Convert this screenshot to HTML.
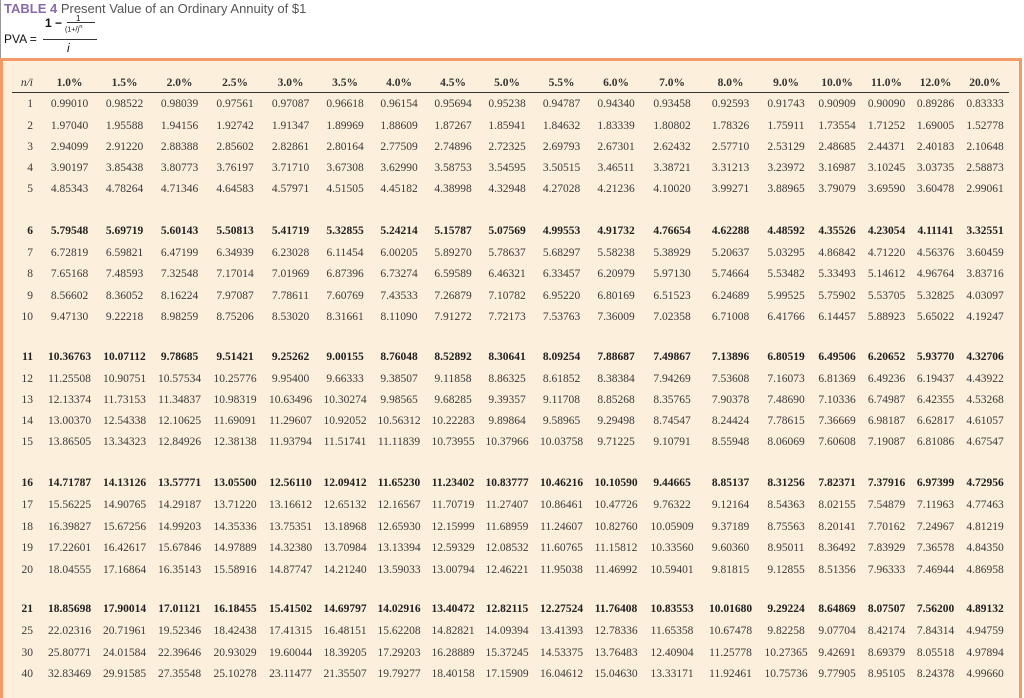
<!DOCTYPE html>
<html><head><meta charset="utf-8"><style>
body{margin:0;width:1024px;height:688px;background:#fff;overflow:hidden;position:relative;font-family:"Liberation Serif",serif;}
.hdr{position:absolute;left:0;top:0;width:1024px;height:58px;border-left:1px solid #999;}
.title{position:absolute;left:3px;top:1px;font-family:"Liberation Sans",sans-serif;font-size:13px;color:#555;}
.title b{color:#8a6aa8;}
.f{position:absolute;font-family:"Liberation Sans",sans-serif;color:#111;}
.panel{position:absolute;left:0;top:58px;width:1022px;height:640px;background:#fcefdc;border-top:3px solid #f29a68;border-left:3px solid #f29a68;border-right:3px solid #f29a68;box-sizing:border-box;}
.r{position:absolute;left:0;display:grid;grid-template-columns:42px 55px 55px 55px 56px 55px 54px 54px 54px 54px 55px 54px 58px 59px 52px 50px 49px 49px 50px;font-size:11.5px;color:#3a3a3a;line-height:14px;}
.r span{text-align:center;}
.r span:first-child{text-align:right;padding-right:9px;}
.b{font-weight:bold;color:#222;}
.h{font-weight:bold;color:#333;}
.h span:first-child{font-style:italic;font-weight:normal;}
.line{position:absolute;left:12px;top:92px;width:997px;height:1px;background:#333;}
</style></head><body>
<div class="hdr">
<div class="title"><b>TABLE 4</b> Present Value of an Ordinary Annuity of $1</div>
<div class="f" style="left:3px;top:32px;font-size:12px;">PVA =</div>
<div class="f" style="left:44px;top:16px;font-size:12px;font-weight:bold;">1 −</div>
<div class="f" style="left:75px;top:14px;font-size:8px;">1</div>
<div class="f" style="left:66px;top:22px;width:28px;height:1px;background:#333;"></div>
<div class="f" style="left:64px;top:24px;font-size:7px;">(1+<i>i</i>)<sup>n</sup></div>
<div class="f" style="left:42px;top:39px;width:54px;height:1px;background:#333;"></div>
<div class="f" style="left:66px;top:41px;font-size:12px;font-style:italic;">i</div>
</div>
<div class="panel"></div>
<div class="r h" style="top:76px"><span>n/i</span><span>1.0%</span><span>1.5%</span><span>2.0%</span><span>2.5%</span><span>3.0%</span><span>3.5%</span><span>4.0%</span><span>4.5%</span><span>5.0%</span><span>5.5%</span><span>6.0%</span><span>7.0%</span><span>8.0%</span><span>9.0%</span><span>10.0%</span><span>11.0%</span><span>12.0%</span><span>20.0%</span></div>
<div class="line"></div>
<div class="r" style="top:97px"><span>1</span><span>0.99010</span><span>0.98522</span><span>0.98039</span><span>0.97561</span><span>0.97087</span><span>0.96618</span><span>0.96154</span><span>0.95694</span><span>0.95238</span><span>0.94787</span><span>0.94340</span><span>0.93458</span><span>0.92593</span><span>0.91743</span><span>0.90909</span><span>0.90090</span><span>0.89286</span><span>0.83333</span></div>
<div class="r" style="top:119px"><span>2</span><span>1.97040</span><span>1.95588</span><span>1.94156</span><span>1.92742</span><span>1.91347</span><span>1.89969</span><span>1.88609</span><span>1.87267</span><span>1.85941</span><span>1.84632</span><span>1.83339</span><span>1.80802</span><span>1.78326</span><span>1.75911</span><span>1.73554</span><span>1.71252</span><span>1.69005</span><span>1.52778</span></div>
<div class="r" style="top:140px"><span>3</span><span>2.94099</span><span>2.91220</span><span>2.88388</span><span>2.85602</span><span>2.82861</span><span>2.80164</span><span>2.77509</span><span>2.74896</span><span>2.72325</span><span>2.69793</span><span>2.67301</span><span>2.62432</span><span>2.57710</span><span>2.53129</span><span>2.48685</span><span>2.44371</span><span>2.40183</span><span>2.10648</span></div>
<div class="r" style="top:161px"><span>4</span><span>3.90197</span><span>3.85438</span><span>3.80773</span><span>3.76197</span><span>3.71710</span><span>3.67308</span><span>3.62990</span><span>3.58753</span><span>3.54595</span><span>3.50515</span><span>3.46511</span><span>3.38721</span><span>3.31213</span><span>3.23972</span><span>3.16987</span><span>3.10245</span><span>3.03735</span><span>2.58873</span></div>
<div class="r" style="top:182px"><span>5</span><span>4.85343</span><span>4.78264</span><span>4.71346</span><span>4.64583</span><span>4.57971</span><span>4.51505</span><span>4.45182</span><span>4.38998</span><span>4.32948</span><span>4.27028</span><span>4.21236</span><span>4.10020</span><span>3.99271</span><span>3.88965</span><span>3.79079</span><span>3.69590</span><span>3.60478</span><span>2.99061</span></div>
<div class="r b" style="top:224px"><span>6</span><span>5.79548</span><span>5.69719</span><span>5.60143</span><span>5.50813</span><span>5.41719</span><span>5.32855</span><span>5.24214</span><span>5.15787</span><span>5.07569</span><span>4.99553</span><span>4.91732</span><span>4.76654</span><span>4.62288</span><span>4.48592</span><span>4.35526</span><span>4.23054</span><span>4.11141</span><span>3.32551</span></div>
<div class="r" style="top:246px"><span>7</span><span>6.72819</span><span>6.59821</span><span>6.47199</span><span>6.34939</span><span>6.23028</span><span>6.11454</span><span>6.00205</span><span>5.89270</span><span>5.78637</span><span>5.68297</span><span>5.58238</span><span>5.38929</span><span>5.20637</span><span>5.03295</span><span>4.86842</span><span>4.71220</span><span>4.56376</span><span>3.60459</span></div>
<div class="r" style="top:267px"><span>8</span><span>7.65168</span><span>7.48593</span><span>7.32548</span><span>7.17014</span><span>7.01969</span><span>6.87396</span><span>6.73274</span><span>6.59589</span><span>6.46321</span><span>6.33457</span><span>6.20979</span><span>5.97130</span><span>5.74664</span><span>5.53482</span><span>5.33493</span><span>5.14612</span><span>4.96764</span><span>3.83716</span></div>
<div class="r" style="top:289px"><span>9</span><span>8.56602</span><span>8.36052</span><span>8.16224</span><span>7.97087</span><span>7.78611</span><span>7.60769</span><span>7.43533</span><span>7.26879</span><span>7.10782</span><span>6.95220</span><span>6.80169</span><span>6.51523</span><span>6.24689</span><span>5.99525</span><span>5.75902</span><span>5.53705</span><span>5.32825</span><span>4.03097</span></div>
<div class="r" style="top:310px"><span>10</span><span>9.47130</span><span>9.22218</span><span>8.98259</span><span>8.75206</span><span>8.53020</span><span>8.31661</span><span>8.11090</span><span>7.91272</span><span>7.72173</span><span>7.53763</span><span>7.36009</span><span>7.02358</span><span>6.71008</span><span>6.41766</span><span>6.14457</span><span>5.88923</span><span>5.65022</span><span>4.19247</span></div>
<div class="r b" style="top:350px"><span>11</span><span>10.36763</span><span>10.07112</span><span>9.78685</span><span>9.51421</span><span>9.25262</span><span>9.00155</span><span>8.76048</span><span>8.52892</span><span>8.30641</span><span>8.09254</span><span>7.88687</span><span>7.49867</span><span>7.13896</span><span>6.80519</span><span>6.49506</span><span>6.20652</span><span>5.93770</span><span>4.32706</span></div>
<div class="r" style="top:372px"><span>12</span><span>11.25508</span><span>10.90751</span><span>10.57534</span><span>10.25776</span><span>9.95400</span><span>9.66333</span><span>9.38507</span><span>9.11858</span><span>8.86325</span><span>8.61852</span><span>8.38384</span><span>7.94269</span><span>7.53608</span><span>7.16073</span><span>6.81369</span><span>6.49236</span><span>6.19437</span><span>4.43922</span></div>
<div class="r" style="top:393px"><span>13</span><span>12.13374</span><span>11.73153</span><span>11.34837</span><span>10.98319</span><span>10.63496</span><span>10.30274</span><span>9.98565</span><span>9.68285</span><span>9.39357</span><span>9.11708</span><span>8.85268</span><span>8.35765</span><span>7.90378</span><span>7.48690</span><span>7.10336</span><span>6.74987</span><span>6.42355</span><span>4.53268</span></div>
<div class="r" style="top:414px"><span>14</span><span>13.00370</span><span>12.54338</span><span>12.10625</span><span>11.69091</span><span>11.29607</span><span>10.92052</span><span>10.56312</span><span>10.22283</span><span>9.89864</span><span>9.58965</span><span>9.29498</span><span>8.74547</span><span>8.24424</span><span>7.78615</span><span>7.36669</span><span>6.98187</span><span>6.62817</span><span>4.61057</span></div>
<div class="r" style="top:435px"><span>15</span><span>13.86505</span><span>13.34323</span><span>12.84926</span><span>12.38138</span><span>11.93794</span><span>11.51741</span><span>11.11839</span><span>10.73955</span><span>10.37966</span><span>10.03758</span><span>9.71225</span><span>9.10791</span><span>8.55948</span><span>8.06069</span><span>7.60608</span><span>7.19087</span><span>6.81086</span><span>4.67547</span></div>
<div class="r b" style="top:476px"><span>16</span><span>14.71787</span><span>14.13126</span><span>13.57771</span><span>13.05500</span><span>12.56110</span><span>12.09412</span><span>11.65230</span><span>11.23402</span><span>10.83777</span><span>10.46216</span><span>10.10590</span><span>9.44665</span><span>8.85137</span><span>8.31256</span><span>7.82371</span><span>7.37916</span><span>6.97399</span><span>4.72956</span></div>
<div class="r" style="top:498px"><span>17</span><span>15.56225</span><span>14.90765</span><span>14.29187</span><span>13.71220</span><span>13.16612</span><span>12.65132</span><span>12.16567</span><span>11.70719</span><span>11.27407</span><span>10.86461</span><span>10.47726</span><span>9.76322</span><span>9.12164</span><span>8.54363</span><span>8.02155</span><span>7.54879</span><span>7.11963</span><span>4.77463</span></div>
<div class="r" style="top:520px"><span>18</span><span>16.39827</span><span>15.67256</span><span>14.99203</span><span>14.35336</span><span>13.75351</span><span>13.18968</span><span>12.65930</span><span>12.15999</span><span>11.68959</span><span>11.24607</span><span>10.82760</span><span>10.05909</span><span>9.37189</span><span>8.75563</span><span>8.20141</span><span>7.70162</span><span>7.24967</span><span>4.81219</span></div>
<div class="r" style="top:541px"><span>19</span><span>17.22601</span><span>16.42617</span><span>15.67846</span><span>14.97889</span><span>14.32380</span><span>13.70984</span><span>13.13394</span><span>12.59329</span><span>12.08532</span><span>11.60765</span><span>11.15812</span><span>10.33560</span><span>9.60360</span><span>8.95011</span><span>8.36492</span><span>7.83929</span><span>7.36578</span><span>4.84350</span></div>
<div class="r" style="top:563px"><span>20</span><span>18.04555</span><span>17.16864</span><span>16.35143</span><span>15.58916</span><span>14.87747</span><span>14.21240</span><span>13.59033</span><span>13.00794</span><span>12.46221</span><span>11.95038</span><span>11.46992</span><span>10.59401</span><span>9.81815</span><span>9.12855</span><span>8.51356</span><span>7.96333</span><span>7.46944</span><span>4.86958</span></div>
<div class="r b" style="top:602px"><span>21</span><span>18.85698</span><span>17.90014</span><span>17.01121</span><span>16.18455</span><span>15.41502</span><span>14.69797</span><span>14.02916</span><span>13.40472</span><span>12.82115</span><span>12.27524</span><span>11.76408</span><span>10.83553</span><span>10.01680</span><span>9.29224</span><span>8.64869</span><span>8.07507</span><span>7.56200</span><span>4.89132</span></div>
<div class="r" style="top:624px"><span>25</span><span>22.02316</span><span>20.71961</span><span>19.52346</span><span>18.42438</span><span>17.41315</span><span>16.48151</span><span>15.62208</span><span>14.82821</span><span>14.09394</span><span>13.41393</span><span>12.78336</span><span>11.65358</span><span>10.67478</span><span>9.82258</span><span>9.07704</span><span>8.42174</span><span>7.84314</span><span>4.94759</span></div>
<div class="r" style="top:646px"><span>30</span><span>25.80771</span><span>24.01584</span><span>22.39646</span><span>20.93029</span><span>19.60044</span><span>18.39205</span><span>17.29203</span><span>16.28889</span><span>15.37245</span><span>14.53375</span><span>13.76483</span><span>12.40904</span><span>11.25778</span><span>10.27365</span><span>9.42691</span><span>8.69379</span><span>8.05518</span><span>4.97894</span></div>
<div class="r" style="top:667px"><span>40</span><span>32.83469</span><span>29.91585</span><span>27.35548</span><span>25.10278</span><span>23.11477</span><span>21.35507</span><span>19.79277</span><span>18.40158</span><span>17.15909</span><span>16.04612</span><span>15.04630</span><span>13.33171</span><span>11.92461</span><span>10.75736</span><span>9.77905</span><span>8.95105</span><span>8.24378</span><span>4.99660</span></div>
</body></html>
